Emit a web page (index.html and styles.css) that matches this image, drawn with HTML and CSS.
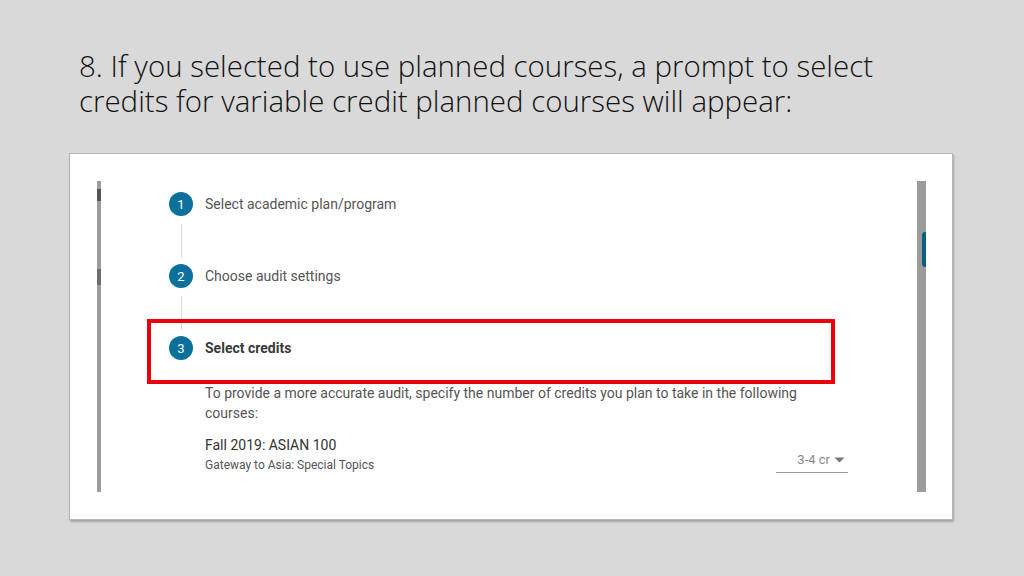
FILE: index.html
```html
<!DOCTYPE html>
<html lang="en">
<head>
<meta charset="utf-8">
<title>Select credits</title>
<link rel="stylesheet" href="styles.css">
</head>
<body>
<div class="slide">
  <h1 class="title">8. If you selected to use planned courses, a prompt to select credits for variable credit planned courses will appear:</h1>
  <div class="card">
    <div class="leftbar"></div>
    <div class="content">
      <div class="step">
        <span class="num">1</span>
        <span class="label">Select academic plan/program</span>
      </div>
      <div class="connector"><span class="line"></span></div>
      <div class="step">
        <span class="num">2</span>
        <span class="label">Choose audit settings</span>
      </div>
      <div class="connector"><span class="line"></span></div>
      <div class="step">
        <span class="num">3</span>
        <span class="label active">Select credits</span>
      </div>
      <div class="panel">
        <p class="intro">To provide a more accurate audit, specify the number of credits you plan to take in the following courses:</p>
        <div class="course">
          <div class="course-info">
            <div class="course-title">Fall 2019: ASIAN 100</div>
            <div class="course-sub">Gateway to Asia: Special Topics</div>
          </div>
          <div class="select">
            <span class="select-value">3-4 cr</span>
            <svg class="caret" width="11" height="6" viewBox="0 0 11 6"><path d="M0.5 0.5 L10.5 0.5 L5.5 5.5 Z" fill="#777"/></svg>
          </div>
        </div>
      </div>
    </div>
    <div class="scrollbar"><span class="thumb"></span></div>
    <div class="highlight"></div>
  </div>
</div>
</body>
</html>
```
FILE: styles.css
```css
html, body {
  margin: 0;
  padding: 0;
}
body {
  background: #d9d9d9;
  width: 1024px;
  height: 576px;
  overflow: hidden;
}
.slide {
  padding: 49px 0 0 79px;
}
.title {
  margin: 0;
  width: 830px;
  font-family: "Open Sans", "Liberation Sans", sans-serif;
  font-weight: 300;
  font-size: 29.45px;
  line-height: 35px;
  color: #111111;
}
.card {
  position: relative;
  margin: 34px 0 0 -10px;
  width: 884px;
  height: 367px;
  box-sizing: border-box;
  padding: 27px 26px 27px 27px;
  background: #ffffff;
  border: 1px solid #b5b5b5;
  box-shadow: 1px 2px 2px rgba(0,0,0,0.25);
  display: flex;
  font-family: Roboto, "Liberation Sans", sans-serif;
}
.leftbar {
  width: 4px;
  flex: none;
  background: linear-gradient(to bottom, #9c9c9c 0 8px, #5b524a 8px 20px, #9c9c9c 20px 88px, #6e6e6e 88px 104px, #9c9c9c 104px);
}
.content {
  flex: 1;
  padding: 11px 69px 0 68px;
  display: flex;
  flex-direction: column;
}
.step {
  display: flex;
  align-items: center;
  height: 24px;
  gap: 12px;
}
.num {
  width: 24px;
  height: 24px;
  border-radius: 50%;
  background: #0b709b;
  color: #ffffff;
  font-size: 13px;
  display: flex;
  align-items: center;
  justify-content: center;
  flex: none;
}
.label {
  font-size: 14px;
  color: #555555;
}
.label.active {
  font-weight: 700;
  color: #3a3a3a;
}
.connector {
  height: 48px;
  display: flex;
  padding-left: 12px;
}
.line {
  width: 1px;
  margin: 8px 0 6px;
  background: #dcdcdc;
}
.panel {
  padding: 23px 0 0 36px;
}
.intro {
  margin: 0;
  font-size: 14px;
  line-height: 20px;
  color: #555555;
}
.course {
  margin-top: 12px;
  display: flex;
  justify-content: space-between;
  align-items: flex-start;
}
.course-title {
  font-size: 14px;
  line-height: 20px;
  color: #333333;
}
.course-sub {
  font-size: 12px;
  line-height: 20px;
  color: #555555;
}
.select {
  margin-top: 15px;
  width: 72px;
  box-sizing: border-box;
  padding: 0 3px 2px 0;
  border-bottom: 1px solid #9a9a9a;
  display: flex;
  justify-content: flex-end;
  align-items: center;
  gap: 4px;
  line-height: 20px;
}
.select-value {
  font-size: 13px;
  color: #8a8a8a;
}
.scrollbar {
  width: 9px;
  flex: none;
  background: #9c9c9c;
  display: flex;
  flex-direction: column;
  align-items: flex-end;
}
.thumb {
  margin-top: 51px;
  width: 4px;
  height: 35px;
  background: #0b5f80;
  border-radius: 3px 0 0 3px;
}
.highlight {
  position: absolute;
  left: 77px;
  top: 165px;
  width: 688px;
  height: 65px;
  box-sizing: border-box;
  border: 4px solid #e8000b;
}
```
